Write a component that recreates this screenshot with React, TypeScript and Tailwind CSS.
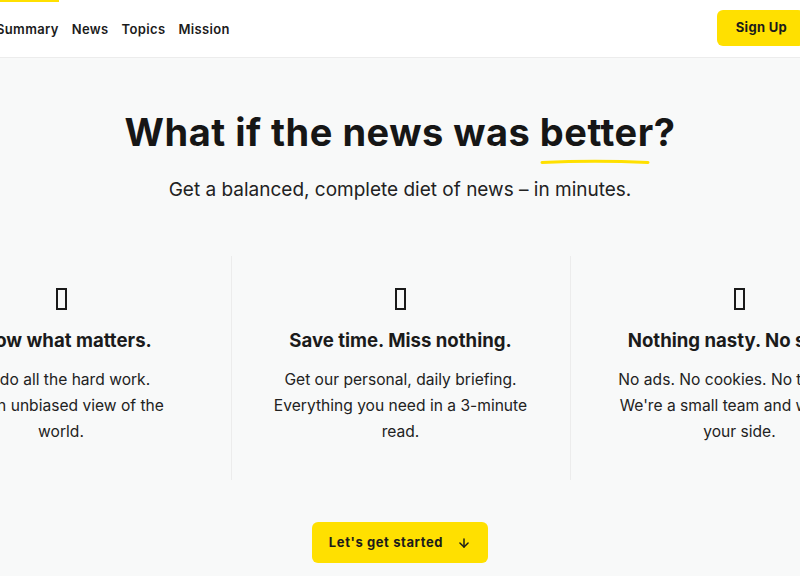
import React from "react";
import { ArrowDown } from "lucide-react";

const font = { fontFamily: "Inter, 'Liberation Sans', sans-serif" };

function Tofu() {
  return <div className="w-[11px] h-[22px] border-2 border-[#1a1a1a]" />;
}

const cols = [
  {
    title: "Know what matters.",
    lines: ["We do all the hard work.", "Get an unbiased view of the", "world."],
  },
  {
    title: "Save time. Miss nothing.",
    lines: ["Get our personal, daily briefing.", "Everything you need in a 3-minute", "read."],
  },
  {
    title: "Nothing nasty. No spam.",
    lines: ["No ads. No cookies. No tracking.", "We're a small team and we're on", "your side."],
  },
];

export default function App() {
  return (
    <div className="w-full h-[576px] overflow-hidden bg-[#f8f9f9] text-[#1b1b1b]" style={font}>
      <header className="h-[58px] bg-white border-b border-[#ececec] flex justify-center">
        <div className="w-[808px] shrink-0 flex items-start justify-between">
          <nav className="flex gap-[13px] text-[13px] font-semibold tracking-[0.35px]">
            <a className="border-t-[2px] border-[#ffe000] pt-[18px] h-[58px]">Summary</a>
            <a className="border-t-[2px] border-transparent pt-[18px]">News</a>
            <a className="border-t-[2px] border-transparent pt-[18px]">Topics</a>
            <a className="border-t-[2px] border-transparent pt-[18px]">Mission</a>
          </nav>
          <button className="mt-[10px] h-[36px] pl-[19px] pr-[17px] rounded-[6px] bg-[#ffe000] text-[13px] font-bold tracking-[0.3px]">
            Sign Up
          </button>
        </div>
      </header>
      <main className="flex flex-col items-center pt-[50px]">
        <h1 className="text-[38px] leading-[48px] font-bold tracking-[0.5px] text-[#161616]">
          What if the news was{" "}
          <span className="relative">
            better
            <svg
              className="absolute left-0 top-[49px]"
              width="110"
              height="8"
              viewBox="0 0 110 8"
            >
              <path
                d="M2 4.5 Q55 2 108 4.5"
                stroke="#ffe000"
                strokeWidth="3"
                fill="none"
                strokeLinecap="round"
              />
            </svg>
          </span>
          ?
        </h1>
        <p className="mt-[20px] text-[19px] leading-[28px] text-[#222]">
          Get a balanced, complete diet of news – in minutes.
        </p>
        <div className="w-full flex justify-center mt-[52px]">
          <div className="w-[1017px] shrink-0 grid grid-cols-3">
            {cols.map((c, i) => (
              <div
                key={i}
                className={
                  "flex flex-col items-center text-center px-[20px] pt-[32px] pb-[35px] " +
                  (i > 0 ? "border-l border-[#ececec]" : "")
                }
              >
                <Tofu />
                <h2 className="mt-[16px] text-[18.6px] leading-[28px] font-bold whitespace-nowrap">
                  {c.title}
                </h2>
                <p className="mt-[13px] text-[15.6px] leading-[26px] text-[#222] whitespace-nowrap">
                  {c.lines[0]}
                  <br />
                  {c.lines[1]}
                  <br />
                  {c.lines[2]}
                </p>
              </div>
            ))}
          </div>
        </div>
        <button className="mt-[42px] h-[41px] w-[176px] rounded-[6px] bg-[#ffe000] flex items-center justify-center gap-[14px] text-[13px] font-bold tracking-[0.6px]">
          Let's get started
          <ArrowDown size={14} strokeWidth={2.5} />
        </button>
      </main>
    </div>
  );
}
